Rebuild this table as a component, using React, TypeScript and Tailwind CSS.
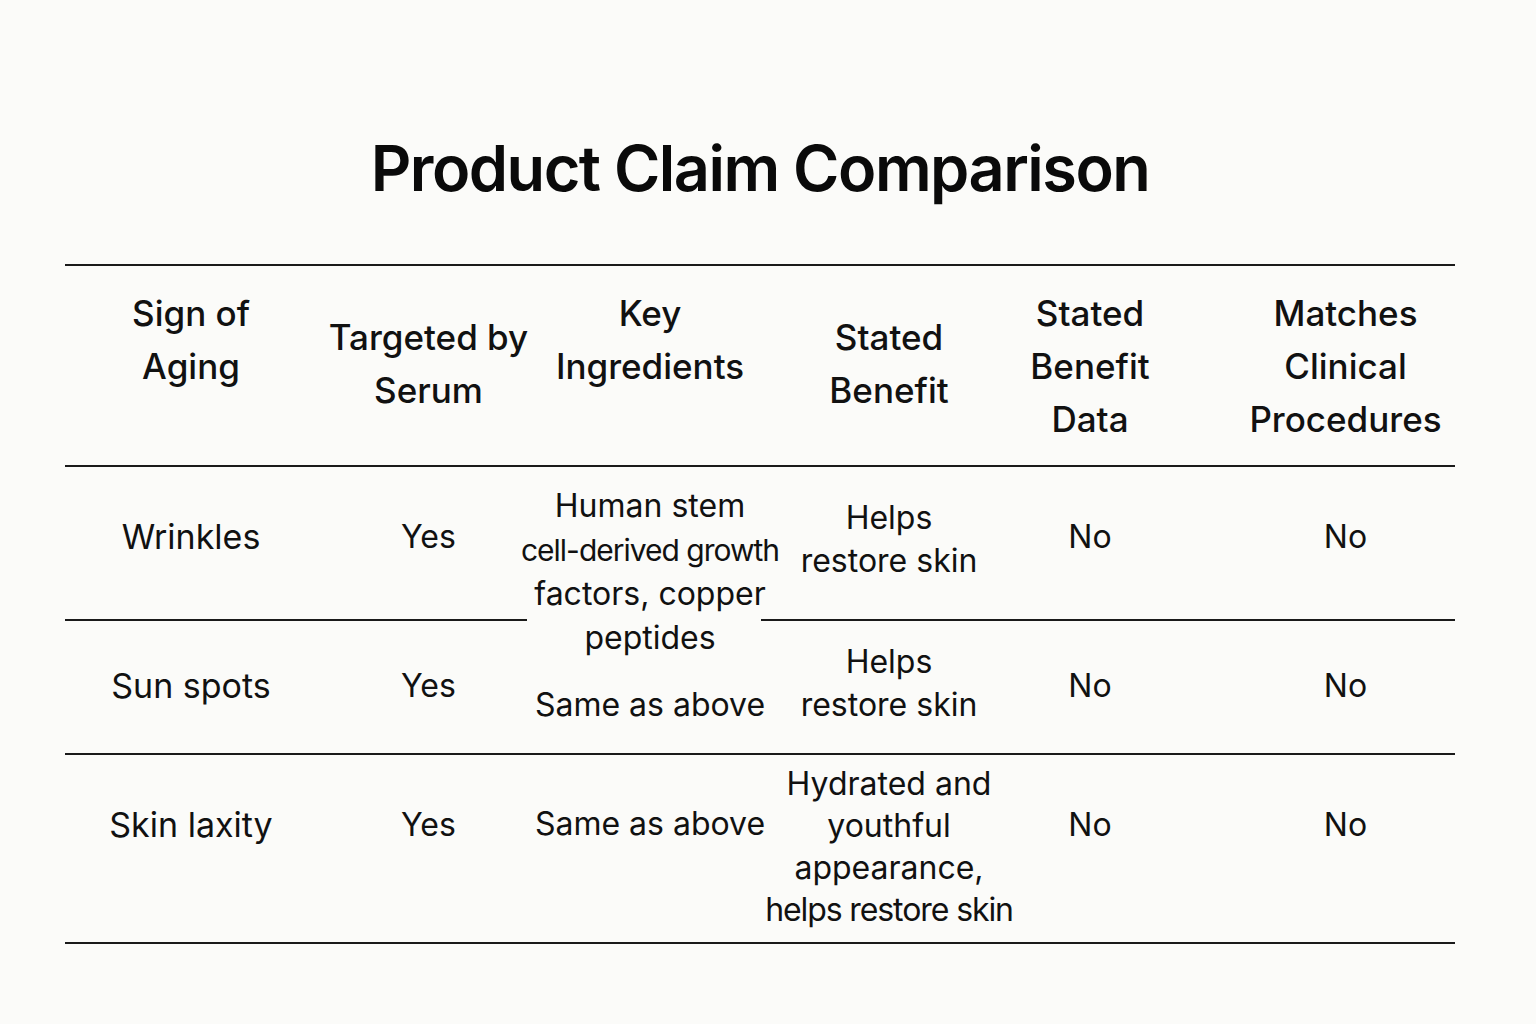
import React from "react";

const font = { fontFamily: "Inter, 'Liberation Sans', Arial, sans-serif" };

function Cell({ w, className = "", children }: { w: string; className?: string; children: React.ReactNode }) {
  return (
    <div className={`${w} shrink-0 flex flex-col items-center text-center whitespace-nowrap ${className}`}>
      {children}
    </div>
  );
}

export default function App() {
  return (
    <div className="w-[1536px] h-[1024px] bg-[#fbfbf9] text-[#111] overflow-hidden" style={font}>
      <div className="ml-[65px] w-[1390px]">
        <div className="h-[264px] flex justify-center pt-[128px]">
          <h1 className="text-[63px] leading-[80px] font-semibold tracking-[-1.5px] text-[#0a0a0a]">
            Product Claim Comparison
          </h1>
        </div>
        {/* header */}
        <div className="h-[2px] bg-[#1a1a1a]" />
        <div className="h-[199px] flex text-[35px] leading-[53px] font-medium">
          <Cell w="w-[252px]" className="pt-[21px]">
            <span>Sign of</span>
            <span>Aging</span>
          </Cell>
          <Cell w="w-[223px]" className="pt-[45px]">
            <span>Targeted by</span>
            <span>Serum</span>
          </Cell>
          <Cell w="w-[220px]" className="pt-[21px]">
            <span>Key</span>
            <span>Ingredients</span>
          </Cell>
          <Cell w="w-[258px]" className="pt-[45px]">
            <span>Stated</span>
            <span>Benefit</span>
          </Cell>
          <Cell w="w-[144px]" className="pt-[21px]">
            <span>Stated</span>
            <span>Benefit</span>
            <span>Data</span>
          </Cell>
          <Cell w="w-[293px]" className="pt-[21px] pl-[74px]">
            <span>Matches</span>
            <span>Clinical</span>
            <span>Procedures</span>
          </Cell>
        </div>
        <div className="h-[2px] bg-[#1a1a1a]" />
        {/* row 1 */}
        <div className="h-[152px] flex text-[32px] leading-[43px]">
          <Cell w="w-[252px]" className="justify-center pb-[14px] text-[34px]">
            <span>Wrinkles</span>
          </Cell>
          <Cell w="w-[223px]" className="justify-center pb-[14px]">
            <span>Yes</span>
          </Cell>
          <Cell w="w-[220px]" className="pt-[17px] leading-[44px]">
            <span>Human stem</span>
            <span className="text-[30px] tracking-[-1px]">cell-derived growth</span>
            <span>factors, copper</span>
            <span>peptides</span>
          </Cell>
          <Cell w="w-[258px]" className="justify-center pb-[8px]">
            <span>Helps</span>
            <span>restore skin</span>
          </Cell>
          <Cell w="w-[144px]" className="justify-center pb-[14px]">
            <span>No</span>
          </Cell>
          <Cell w="w-[293px]" className="justify-center pb-[14px] pl-[74px]">
            <span>No</span>
          </Cell>
        </div>
        <div className="h-[2px] flex">
          <div className="w-[462px] bg-[#1a1a1a]" />
          <div className="w-[234px]" />
          <div className="flex-1 bg-[#1a1a1a]" />
        </div>
        {/* row 2 */}
        <div className="h-[132px] flex text-[32px] leading-[43px]">
          <Cell w="w-[252px]" className="justify-center pb-[4px] text-[34px]">
            <span>Sun spots</span>
          </Cell>
          <Cell w="w-[223px]" className="justify-center pb-[4px]">
            <span>Yes</span>
          </Cell>
          <Cell w="w-[220px]" className="pt-[62px]">
            <span>Same as above</span>
          </Cell>
          <Cell w="w-[258px]" className="justify-center pb-[8px]">
            <span>Helps</span>
            <span>restore skin</span>
          </Cell>
          <Cell w="w-[144px]" className="justify-center pb-[4px]">
            <span>No</span>
          </Cell>
          <Cell w="w-[293px]" className="justify-center pb-[4px] pl-[74px]">
            <span>No</span>
          </Cell>
        </div>
        <div className="h-[2px] bg-[#1a1a1a]" />
        {/* row 3 */}
        <div className="h-[187px] flex text-[32px] leading-[42px]">
          <Cell w="w-[252px]" className="justify-center pb-[48px] text-[34px]">
            <span>Skin laxity</span>
          </Cell>
          <Cell w="w-[223px]" className="justify-center pb-[48px]">
            <span>Yes</span>
          </Cell>
          <Cell w="w-[220px]" className="justify-center pb-[50px]">
            <span>Same as above</span>
          </Cell>
          <Cell w="w-[258px]" className="justify-center pb-[4px]">
            <span>Hydrated and</span>
            <span>youthful</span>
            <span>appearance,</span>
            <span className="tracking-[-1.1px]">helps restore skin</span>
          </Cell>
          <Cell w="w-[144px]" className="justify-center pb-[48px]">
            <span>No</span>
          </Cell>
          <Cell w="w-[293px]" className="justify-center pb-[48px] pl-[74px]">
            <span>No</span>
          </Cell>
        </div>
        <div className="h-[2px] bg-[#1a1a1a]" />
      </div>
    </div>
  );
}
